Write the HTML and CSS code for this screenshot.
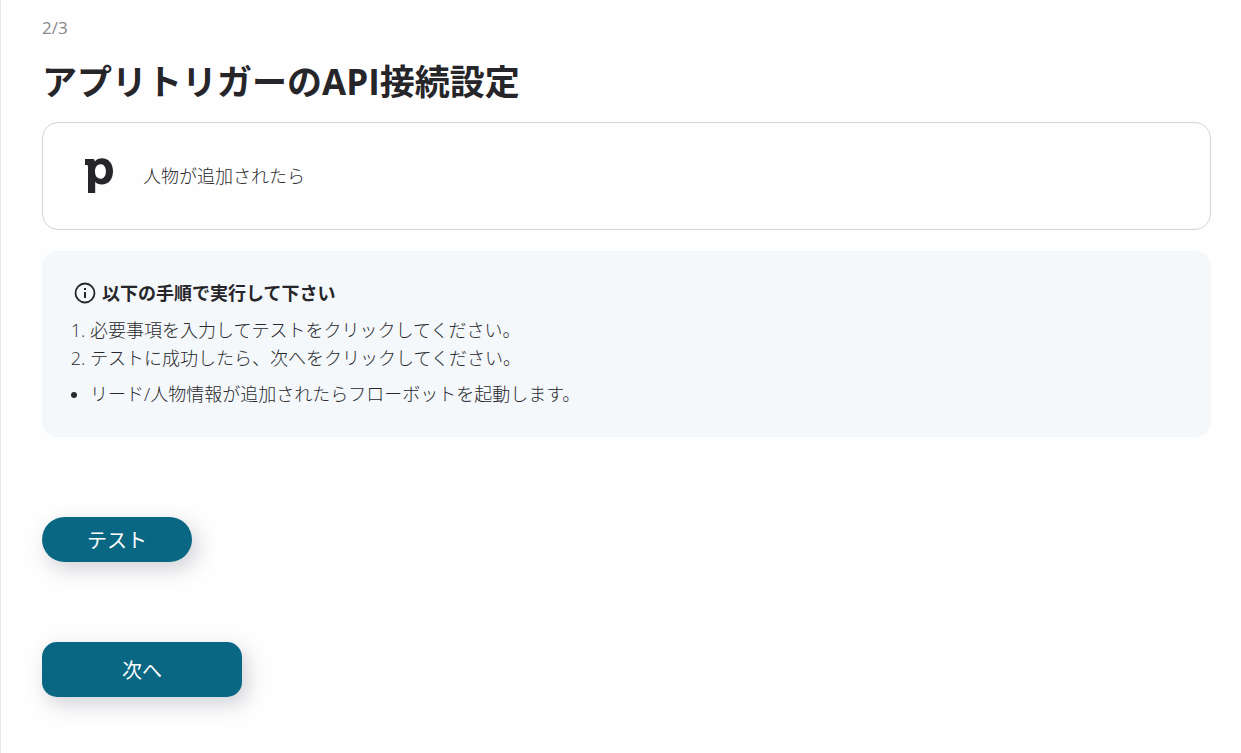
FILE: index.html
```html
<!DOCTYPE html>
<html lang="ja">

<head>
    <meta charset="UTF-8">
    <meta name="viewport" content="width=device-width, initial-scale=1.0">
    <title>アプリトリガーのAPI接続設定</title>
    <link rel="stylesheet" href="styles.css">
</head>

<body>
    <main class="page">
        <p class="step">2/3</p>
        <h1>アプリトリガーのAPI接続設定</h1>

        <div class="trigger">
            <svg class="trigger-logo" width="30" height="36" viewBox="0 0 30 36" aria-hidden="true">
                <path fill="#262529" fill-rule="evenodd" d="M0 1H8.500Q9.600 1 9.900 3.500C11.500 1.200 14 .2 17 .2C23.700 .2 28 5.500 28 13.300C28 21.300 23.400 26.600 16.800 26.600C13.800 26.600 11.500 25.500 10.200 23.800V35H3V8.300Q3 7 1.800 7H0ZM15.600 6.300C12.300 6.300 10 9 10 13.600C10 17.900 12.200 20.700 15.500 20.700C18.700 20.700 20.900 17.900 20.900 13.400C20.900 9 18.800 6.300 15.600 6.300Z" />
            </svg>
            <span>人物が追加されたら</span>
        </div>

        <section class="guide">
            <h2>
                <svg width="22" height="22" viewBox="0 0 22 22" aria-hidden="true">
                    <circle cx="11" cy="11" r="9.500" fill="none" stroke="#262529" stroke-width="1.800" />
                    <path fill="#262529" d="M10 6h2v2h-2zM10 10h2v6h-2z" />
                </svg>
                以下の手順で実行して下さい
            </h2>
            <ol>
                <li>必要事項を入力してテストをクリックしてください。</li>
                <li>テストに成功したら、次へをクリックしてください。</li>
            </ol>
            <ul>
                <li>リード/人物情報が追加されたらフローボットを起動します。</li>
            </ul>
        </section>

        <div class="actions">
            <button type="button" class="btn btn-test">テスト</button>
            <button type="button" class="btn btn-next">次へ</button>
        </div>
    </main>
</body>

</html>
```
FILE: styles.css
```css
* {
    box-sizing: border-box;
}

body {
    margin: 0;
    background-color: #fefefe;
    color: #29292d;
    font-family: "Open Sans", "Noto Sans CJK JP", sans-serif;
    font-size: 18px;
    font-weight: 300;
    line-height: 28px;
}

.page {
    min-height: 100vh;
    padding: 14px 30px 56px 41px;
    border-left: 1px solid #e8e8ea;
}

.step {
    margin: 0;
    color: #88878c;
    font-size: 17px;
    font-weight: 400;
}

h1 {
    margin: 12px 0 13px;
    color: #262529;
    font-size: 35px;
    font-weight: 700;
    line-height: 55px;
}

.trigger {
    display: flex;
    align-items: center;
    gap: 28px;
    min-height: 108px;
    padding: 20px 42px;
    border: 1px solid #d6d3da;
    border-radius: 16px;
}

.trigger-logo {
    flex: none;
}

.guide {
    margin-top: 21px;
    padding: 28px 32px 29px;
    background-color: #f4f8fb;
    border-radius: 16px;
}

.guide h2 {
    display: flex;
    align-items: center;
    gap: 6px;
    margin: 0 0 9px;
    color: #262529;
    font-size: 18px;
    font-weight: 700;
}

.guide ol,
.guide ul {
    margin: 0;
    padding-left: 16px;
}

.guide ul {
    margin-top: 8px;
}

.actions {
    display: flex;
    flex-direction: column;
    align-items: flex-start;
    gap: 80px;
    margin-top: 80px;
}

.btn {
    border: none;
    background-color: #0a6783;
    box-shadow: 5px 7px 20px rgba(50, 50, 80, 0.22);
    color: #fff;
    font-family: inherit;
    font-size: 20px;
    font-weight: 400;
    cursor: pointer;
}

.btn-test {
    width: 150px;
    height: 45px;
    border-radius: 23px;
}

.btn-next {
    width: 200px;
    height: 55px;
    border-radius: 15px;
}
```
